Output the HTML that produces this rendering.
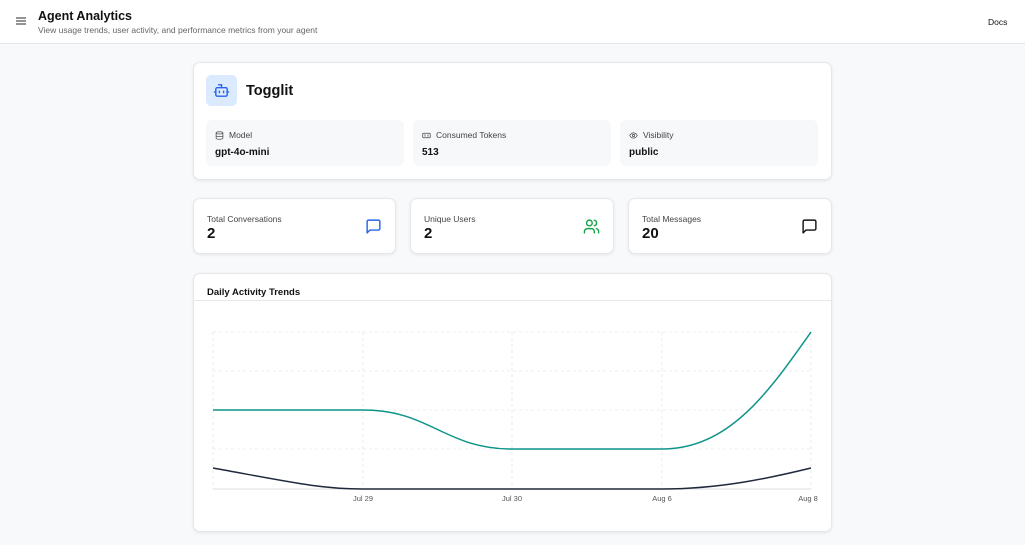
<!DOCTYPE html><html><head><style>
*{box-sizing:border-box;margin:0;padding:0}
body{width:1025px;height:545px;overflow:hidden;background:#f8f9fb;font-family:"Liberation Sans",sans-serif;color:#111;position:relative}
.hdr{position:absolute;left:0;top:0;width:1025px;height:44px;background:#fff;border-bottom:1px solid #e5e7eb}
.card{position:absolute;background:#fff;border:1px solid #e5e7eb;border-radius:7px;box-shadow:0 1px 3px rgba(0,0,0,.08)}
.ib{position:absolute;top:120px;height:46px;width:198px;background:#f7f8fa;border-radius:6px}
.ib .l{position:absolute;left:9px;top:10px;font-size:8.5px;color:#444;display:flex;align-items:center;gap:5px}
.ib .v{position:absolute;left:9px;top:27px;font-size:10px;font-weight:bold}
.st .l{position:absolute;left:13px;top:15px;font-size:8.5px;color:#444}
.st .v{position:absolute;left:13px;top:26px;font-size:15px;font-weight:bold}
.st svg{position:absolute;right:13px;top:19px}
</style></head><body>
<div class="hdr">
<svg style="position:absolute;left:16px;top:17px" width="10" height="8"><path d="M0 1h10M0 4h10M0 7h10" stroke="#555" stroke-width="1.3"/></svg>
<div style="position:absolute;left:38px;top:9px;font-size:12.5px;font-weight:bold">Agent Analytics</div>
<div style="position:absolute;left:38px;top:25px;font-size:8.5px;color:#666">View usage trends, user activity, and performance metrics from your agent</div>
<div style="position:absolute;left:988px;top:17px;font-size:8.5px">Docs</div>
</div>
<div class="card" style="left:193px;top:62px;width:639px;height:118px"></div>
<div style="position:absolute;left:206px;top:75px;width:31px;height:31px;background:#dbeafe;border-radius:5px"></div>
<svg style="position:absolute;left:213px;top:82px" width="17" height="17" viewBox="0 0 24 24" fill="none" stroke="#2563eb" stroke-width="2" stroke-linecap="round"><path d="M12 8V4H8"/><rect x="4" y="8" width="16" height="12" rx="2"/><path d="M2 14h2M20 14h2M15 13v2M9 13v2"/></svg>
<div style="position:absolute;left:246px;top:83px;font-size:14.5px;font-weight:bold">Togglit</div>
<div class="ib" style="left:206px"><div class="l"><svg width="9" height="9" viewBox="0 0 24 24" fill="none" stroke="#444" stroke-width="2"><ellipse cx="12" cy="5" rx="9" ry="3"/><path d="M3 5v14c0 1.7 4 3 9 3s9-1.3 9-3V5M3 12c0 1.7 4 3 9 3s9-1.3 9-3"/></svg>Model</div><div class="v">gpt-4o-mini</div></div>
<div class="ib" style="left:413px"><div class="l"><svg width="9" height="9" viewBox="0 0 24 24" fill="none" stroke="#444" stroke-width="2"><rect x="2" y="6" width="20" height="12" rx="2"/><path d="M8 9v6M16 9v6"/></svg>Consumed Tokens</div><div class="v">513</div></div>
<div class="ib" style="left:620px"><div class="l"><svg width="9" height="9" viewBox="0 0 24 24" fill="none" stroke="#444" stroke-width="2"><path d="M2 12s4-7 10-7 10 7 10 7-4 7-10 7S2 12 2 12z"/><circle cx="12" cy="12" r="3"/></svg>Visibility</div><div class="v">public</div></div>
<div class="card st" style="left:193px;top:198px;width:203px;height:56px"><div class="l">Total Conversations</div><div class="v">2</div><svg width="17" height="17" viewBox="0 0 24 24" fill="none" stroke="#2563eb" stroke-width="2" stroke-linejoin="round"><path d="M21 15a2 2 0 0 1-2 2H7l-4 4V5a2 2 0 0 1 2-2h14a2 2 0 0 1 2 2z"/></svg></div>
<div class="card st" style="left:410px;top:198px;width:204px;height:56px"><div class="l">Unique Users</div><div class="v">2</div><svg width="17" height="17" viewBox="0 0 24 24" fill="none" stroke="#16a34a" stroke-width="2" stroke-linecap="round"><path d="M16 21v-2a4 4 0 0 0-4-4H6a4 4 0 0 0-4 4v2"/><circle cx="9" cy="7" r="4"/><path d="M22 21v-2a4 4 0 0 0-3-3.9M16 3.1a4 4 0 0 1 0 7.8"/></svg></div>
<div class="card st" style="left:628px;top:198px;width:204px;height:56px"><div class="l">Total Messages</div><div class="v">20</div><svg width="17" height="17" viewBox="0 0 24 24" fill="none" stroke="#111" stroke-width="2" stroke-linejoin="round"><path d="M21 15a2 2 0 0 1-2 2H7l-4 4V5a2 2 0 0 1 2-2h14a2 2 0 0 1 2 2z"/></svg></div>
<div class="card" style="left:193px;top:273px;width:639px;height:259px"><div style="position:absolute;left:0;top:26px;width:100%;border-top:1px solid #e5e7eb"></div><div style="position:absolute;left:13px;top:13px;font-size:9.5px;font-weight:bold">Daily Activity Trends</div></div>
<svg style="position:absolute;left:0;top:0" width="1025" height="545">
<g stroke="#e5e7eb" stroke-dasharray="3 3" stroke-width="0.8"><path d="M213 332H811M213 371H811M213 410H811M213 449H811M213 332V489M363 332V489M512 332V489M662 332V489M811 332V489"/></g>
<path d="M213 489H811" stroke="#ddd"/>
<path d="M213 410H363C430 410 445 449 512 449H662C730 449 770 390 811 332" fill="none" stroke="#0d9488" stroke-width="1.5"/>
<path d="M213 468C290 482 320 489 363 489H662C720 489 770 478 811 468" fill="none" stroke="#1e293b" stroke-width="1.5"/>
<g font-size="7.5" fill="#555" text-anchor="middle" font-family="Liberation Sans"><text x="363" y="501">Jul 29</text><text x="512" y="501">Jul 30</text><text x="662" y="501">Aug 6</text><text x="808" y="501">Aug 8</text></g>
</svg>
</body></html>
